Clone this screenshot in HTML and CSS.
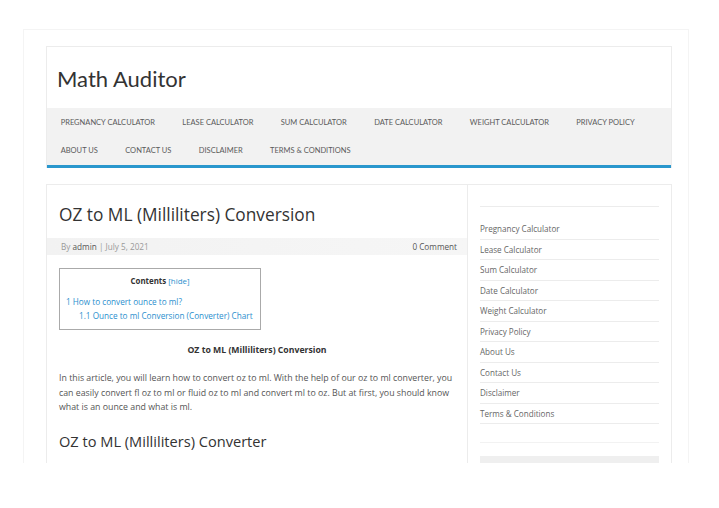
FILE: index.html
```html
<!DOCTYPE html>
<html>
<head>
<meta charset="utf-8">
<link rel="stylesheet" href="styles.css">
</head>
<body>
<div class="page">
  <header class="site-header">
    <div class="brand">Math Auditor</div>
    <nav class="nav">
      <a>PREGNANCY CALCULATOR</a>
      <a>LEASE CALCULATOR</a>
      <a>SUM CALCULATOR</a>
      <a>DATE CALCULATOR</a>
      <a>WEIGHT CALCULATOR</a>
      <a>PRIVACY POLICY</a>
      <a>ABOUT US</a>
      <a>CONTACT US</a>
      <a>DISCLAIMER</a>
      <a>TERMS &amp; CONDITIONS</a>
    </nav>
  </header>
  <div class="main">
    <article class="content">
      <h1 class="title">OZ to ML (Milliliters) Conversion</h1>
      <div class="meta">
        <span>By <b>admin</b> | July 5, 2021</span>
        <span class="comments">0 Comment</span>
      </div>
      <div class="toc">
        <div class="toc-title">Contents <span class="link">[hide]</span></div>
        <div class="toc-item link">1 How to convert ounce to ml?</div>
        <div class="toc-item sub link">1.1 Ounce to ml Conversion (Converter) Chart</div>
      </div>
      <p class="center-bold">OZ to ML (Milliliters) Conversion</p>
      <p class="para">In this article, you will learn how to convert oz to ml. With the help of our oz to ml converter, you can easily convert fl oz to ml or fluid oz to ml and convert ml to oz. But at first, you should know what is an ounce and what is ml.</p>
      <h2 class="subtitle">OZ to ML (Milliliters) Converter</h2>
    </article>
    <aside class="sidebar">
      <ul class="menu">
        <li>Pregnancy Calculator</li>
        <li>Lease Calculator</li>
        <li>Sum Calculator</li>
        <li>Date Calculator</li>
        <li>Weight Calculator</li>
        <li>Privacy Policy</li>
        <li>About Us</li>
        <li>Contact Us</li>
        <li>Disclaimer</li>
        <li>Terms &amp; Conditions</li>
      </ul>
      <div class="widget-gap"></div>
      <div class="widget-block"></div>
    </aside>
  </div>
</div>
</body>
</html>
```
FILE: styles.css
```css
html, body {
  margin: 0;
  padding: 0;
  background: #fff;
  height: 508px;
  overflow: hidden;
}
body {
  font-family: "Open Sans", "Lato", sans-serif;
  color: #555;
}
.page {
  margin: 29px 30px 0 23px;
  border: 1px solid #f4f4f4;
  border-bottom: none;
  padding: 16px 16px 0 22px;
  height: 434px;
  overflow: hidden;
  box-sizing: border-box;
}
.site-header {
  border: 1px solid #ececec;
  border-bottom: none;
}
.brand {
  font-family: "Lato", sans-serif;
  height: 61px;
  display: flex;
  align-items: center;
  padding-left: 10px;
  font-size: 22px;
  color: #333;
  padding-top: 1px;
  box-sizing: border-box;
}
.nav {
  font-family: "Lato", sans-serif;
  background: #f2f2f2;
  border-bottom: 3px solid #2a97cd;
  display: flex;
  flex-wrap: wrap;
  padding-top: 1px;
}
.nav a {
  font-size: 7.5px;
  color: #5a5a5a;
  padding: 0 13.7px;
  height: 28px;
  line-height: 28px;
}
.main {
  margin-top: 16px;
  border: 1px solid #ececec;
  border-bottom: none;
  display: flex;
  height: 400px;
}
.content {
  width: 421px;
  border-right: 1px solid #ececec;
  box-sizing: border-box;
  padding: 0 12px 0 12px;
}
.title {
  margin: 19px 0 0 0;
  font-weight: 400;
  font-size: 17.3px;
  color: #333;
  line-height: 22px;
}
.meta {
  margin: 12px -12px 0 -12px;
  padding: 0 10px 0 14px;
  background: linear-gradient(to right, #f2f2f2, #f6f6f6);
  height: 17px;
  display: flex;
  justify-content: space-between;
  align-items: center;
  font-size: 8.2px;
  color: #999;
}
.meta b {
  font-weight: 400;
  color: #555;
}
.meta .comments {
  color: #555;
}
.toc {
  margin-top: 13px;
  width: 202px;
  border: 1px solid #aaa;
  box-sizing: border-box;
  padding: 6px 6px 6px 6px;
  font-size: 8.2px;
}
.toc-title {
  text-align: center;
  font-weight: 700;
  color: #333;
  line-height: 12px;
  font-size: 7.9px;
}
.toc-title .link {
  font-weight: 400;
}
.link {
  color: #2b8fce;
}
.toc-item {
  line-height: 14px;
}
.toc-title + .toc-item {
  margin-top: 8px;
}
.toc-item.sub {
  padding-left: 13px;
}
.center-bold {
  margin: 13px 0 0 0;
  text-align: center;
  font-weight: 700;
  font-size: 8.7px;
  color: #333;
  line-height: 14px;
}
.para {
  margin: 14px 0 0 0;
  font-size: 8.8px;
  line-height: 14.7px;
  color: #555;
}
.subtitle {
  margin: 17px 0 0 0;
  font-weight: 400;
  font-size: 14.6px;
  color: #333;
  line-height: 18px;
}
.sidebar {
  flex: 1;
  padding: 21px 12px 0 12px;
}
.menu {
  list-style: none;
  margin: 0;
  padding: 12px 0 0 0;
  border-top: 1px solid #ececec;
}
.menu li {
  font-size: 8.1px;
  color: #666;
  height: 20.5px;
  line-height: 20px;
  border-bottom: 1px solid #ececec;
  box-sizing: border-box;
}
.widget-gap {
  height: 18px;
  border-bottom: 1px solid #f2f2f2;
}
.widget-block {
  margin-top: 13px;
  height: 10px;
  background: #efefef;
}
```
